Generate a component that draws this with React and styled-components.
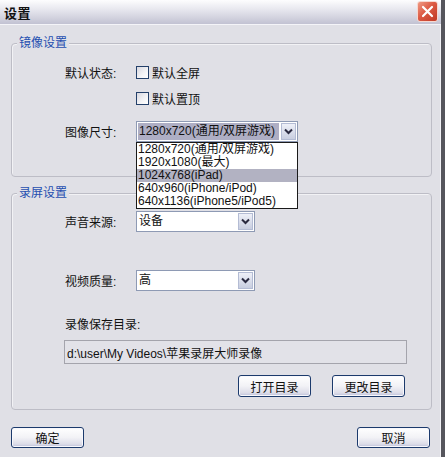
import React from "react"
import styled, { createGlobalStyle } from "styled-components"

const GlobalStyle = createGlobalStyle`
  body {
    margin: 0;
    font-family: "Liberation Sans", "Noto Sans CJK SC", sans-serif;
    font-size: 12px;
    color: #111;
  }
`

const Window = styled.div`
  width: 445px;
  height: 457px;
  box-sizing: border-box;
  background: #e0e0e6;
  border-right: 4px solid #55555c;
  box-shadow: inset -1px 0 0 #f0f0f4;
  overflow: hidden;
`

const TitleBar = styled.div`
  height: 25px;
  display: flex;
  align-items: center;
  justify-content: space-between;
  padding: 0 3px 0 4px;
  box-sizing: border-box;
  background: linear-gradient(#fdfdfe 0%, #e4e4ec 45%, #c2c2d2 100%);
  border-bottom: 1px solid #f4f4f8;
`

const Title = styled.span`
  font-weight: 700;
  font-size: 13px;
  letter-spacing: 0.5px;
`

const CloseButton = styled.div`
  width: 19px;
  height: 19px;
  margin-top: -2px;
  border-radius: 3px;
  border: 1px solid #f6d8d0;
  background: linear-gradient(135deg, #f09a84 0%, #dc5a44 45%, #c03a26 100%);
  display: flex;
  align-items: center;
  justify-content: center;
`

const Body = styled.div`
  padding: 18px 9px 0 11px;
`

const GroupBox = styled.div`
  position: relative;
  border: 1px solid #bdbdc6;
  border-radius: 4px;
  box-shadow: inset 1px 1px 0 #f2f2f5;
  padding: ${p => p.$pad};
  margin-top: ${p => p.$top || 0}px;
`

const Legend = styled.span`
  position: absolute;
  top: -8px;
  left: 5px;
  padding: 0 2px;
  background: #e0e0e6;
  color: #1f4fb0;
  line-height: 14px;
`

const Row = styled.div`
  display: grid;
  grid-template-columns: 72px auto;
  align-items: center;
  height: ${p => p.$h}px;
  margin-top: ${p => p.$top || 0}px;
`

const Label = styled.span`
  padding-left: 1px;
  white-space: nowrap;
`

const Check = styled.label`
  display: flex;
  align-items: center;
  gap: 3px;
`

const CheckBox = styled.span`
  width: 11px;
  height: 11px;
  border: 1px solid #24406a;
  background: linear-gradient(135deg, #d8d8e0 0%, #f4f4f6 60%, #ffffff 100%);
`

const ComboWrap = styled.div`
  position: relative;
  width: ${p => p.$w}px;
`

const Combo = styled.div`
  height: 21px;
  box-sizing: border-box;
  border: 1px solid #8e9ab4;
  background: #fff;
  display: flex;
  align-items: center;
  padding: 1px;
`

const ComboText = styled.span`
  flex: 1;
  height: 17px;
  line-height: 17px;
  padding-left: 1px;
  margin-right: 2px;
  background: ${p => (p.$selected ? "#aeaec4" : "transparent")};
  white-space: nowrap;
  overflow: hidden;
`

const ArrowButton = styled.span`
  width: 15px;
  height: 17px;
  box-sizing: border-box;
  border: 1px solid #b4bcd4;
  background: linear-gradient(#eef0f8, #c8cee0);
  display: flex;
  align-items: center;
  justify-content: center;
`

const DropList = styled.ul`
  position: absolute;
  top: 100%;
  left: 0;
  right: 0;
  margin: 0;
  padding: 0;
  list-style: none;
  background: #fff;
  border: 1px solid #1a1a1a;
  z-index: 2;
`

const DropItem = styled.li`
  height: 13px;
  line-height: 13px;
  padding-left: 1px;
  background: ${p => (p.$active ? "#b2b2c2" : "transparent")};
  white-space: nowrap;
`

const PathField = styled.div`
  height: 24px;
  box-sizing: border-box;
  border: 1px solid #a4a4ac;
  background: #e2e2e8;
  display: flex;
  align-items: center;
  padding-left: 2px;
  margin-top: ${p => p.$top}px;
`

const ButtonRow = styled.div`
  display: flex;
  justify-content: ${p => p.$justify || "flex-end"};
  gap: 21px;
  margin-top: ${p => p.$top}px;
  padding-right: ${p => p.$right || 0}px;
`

const Button = styled.button`
  width: 73px;
  height: ${p => p.$h || 22}px;
  padding: 0;
  box-sizing: border-box;
  font: inherit;
  color: #111;
  border: 1px solid #1c3a6c;
  border-radius: 3px;
  background: linear-gradient(#ffffff 0%, #f2f2f6 50%, #dcdce8 85%, #b8bcd8 100%);
  box-shadow: inset 0 0 0 1px #f8f8fc;
`

const Chevron = () => (
  <svg width="9" height="7" viewBox="0 0 9 7">
    <path d="M1 1.5 L4.5 5 L8 1.5" fill="none" stroke="#2a2a40" strokeWidth="2" />
  </svg>
)

const sizes = [
  "1280x720(通用/双屏游戏)",
  "1920x1080(最大)",
  "1024x768(iPad)",
  "640x960(iPhone/iPod)",
  "640x1136(iPhone5/iPod5)",
]

export default function App() {
  return (
    <Window>
      <GlobalStyle />
      <TitleBar>
        <Title>设置</Title>
        <CloseButton>
          <svg width="13" height="13" viewBox="0 0 13 13">
            <path d="M2 2 L11 11 M11 2 L2 11" stroke="#fff" strokeWidth="2.2" strokeLinecap="round" />
          </svg>
        </CloseButton>
      </TitleBar>
      <Body>
        <GroupBox $pad="18px 24px 34px 52px">
          <Legend>镜像设置</Legend>
          <Row $h={20}>
            <Label>默认状态:</Label>
            <Check>
              <CheckBox />
              默认全屏
            </Check>
          </Row>
          <Row $h={20} $top={6}>
            <span />
            <Check>
              <CheckBox />
              默认置顶
            </Check>
          </Row>
          <Row $h={21} $top={13}>
            <Label>图像尺寸:</Label>
            <ComboWrap $w={162}>
              <Combo>
                <ComboText $selected>{sizes[0]}</ComboText>
                <ArrowButton>
                  <Chevron />
                </ArrowButton>
              </Combo>
              <DropList>
                {sizes.map((s, i) => (
                  <DropItem key={s} $active={i === 2}>
                    {s}
                  </DropItem>
                ))}
              </DropList>
            </ComboWrap>
          </Row>
        </GroupBox>

        <GroupBox $top={16} $pad="17px 24px 12px 52px">
          <Legend>录屏设置</Legend>
          <Row $h={21}>
            <Label>声音来源:</Label>
            <ComboWrap $w={119}>
              <Combo>
                <ComboText>设备</ComboText>
                <ArrowButton>
                  <Chevron />
                </ArrowButton>
              </Combo>
            </ComboWrap>
          </Row>
          <Row $h={21} $top={38}>
            <Label>视频质量:</Label>
            <ComboWrap $w={119}>
              <Combo>
                <ComboText>高</ComboText>
                <ArrowButton>
                  <Chevron />
                </ArrowButton>
              </Combo>
            </ComboWrap>
          </Row>
          <Row $h={16} $top={24}>
            <Label>录像保存目录:</Label>
          </Row>
          <PathField $top={9}>d:\user\My Videos\苹果录屏大师录像</PathField>
          <ButtonRow $top={11} $right={2}>
            <Button>打开目录</Button>
            <Button>更改目录</Button>
          </ButtonRow>
        </GroupBox>

        <ButtonRow $top={17} $justify="space-between" $right={2}>
          <Button $h={21}>确定</Button>
          <Button $h={21}>取消</Button>
        </ButtonRow>
      </Body>
    </Window>
  )
}
